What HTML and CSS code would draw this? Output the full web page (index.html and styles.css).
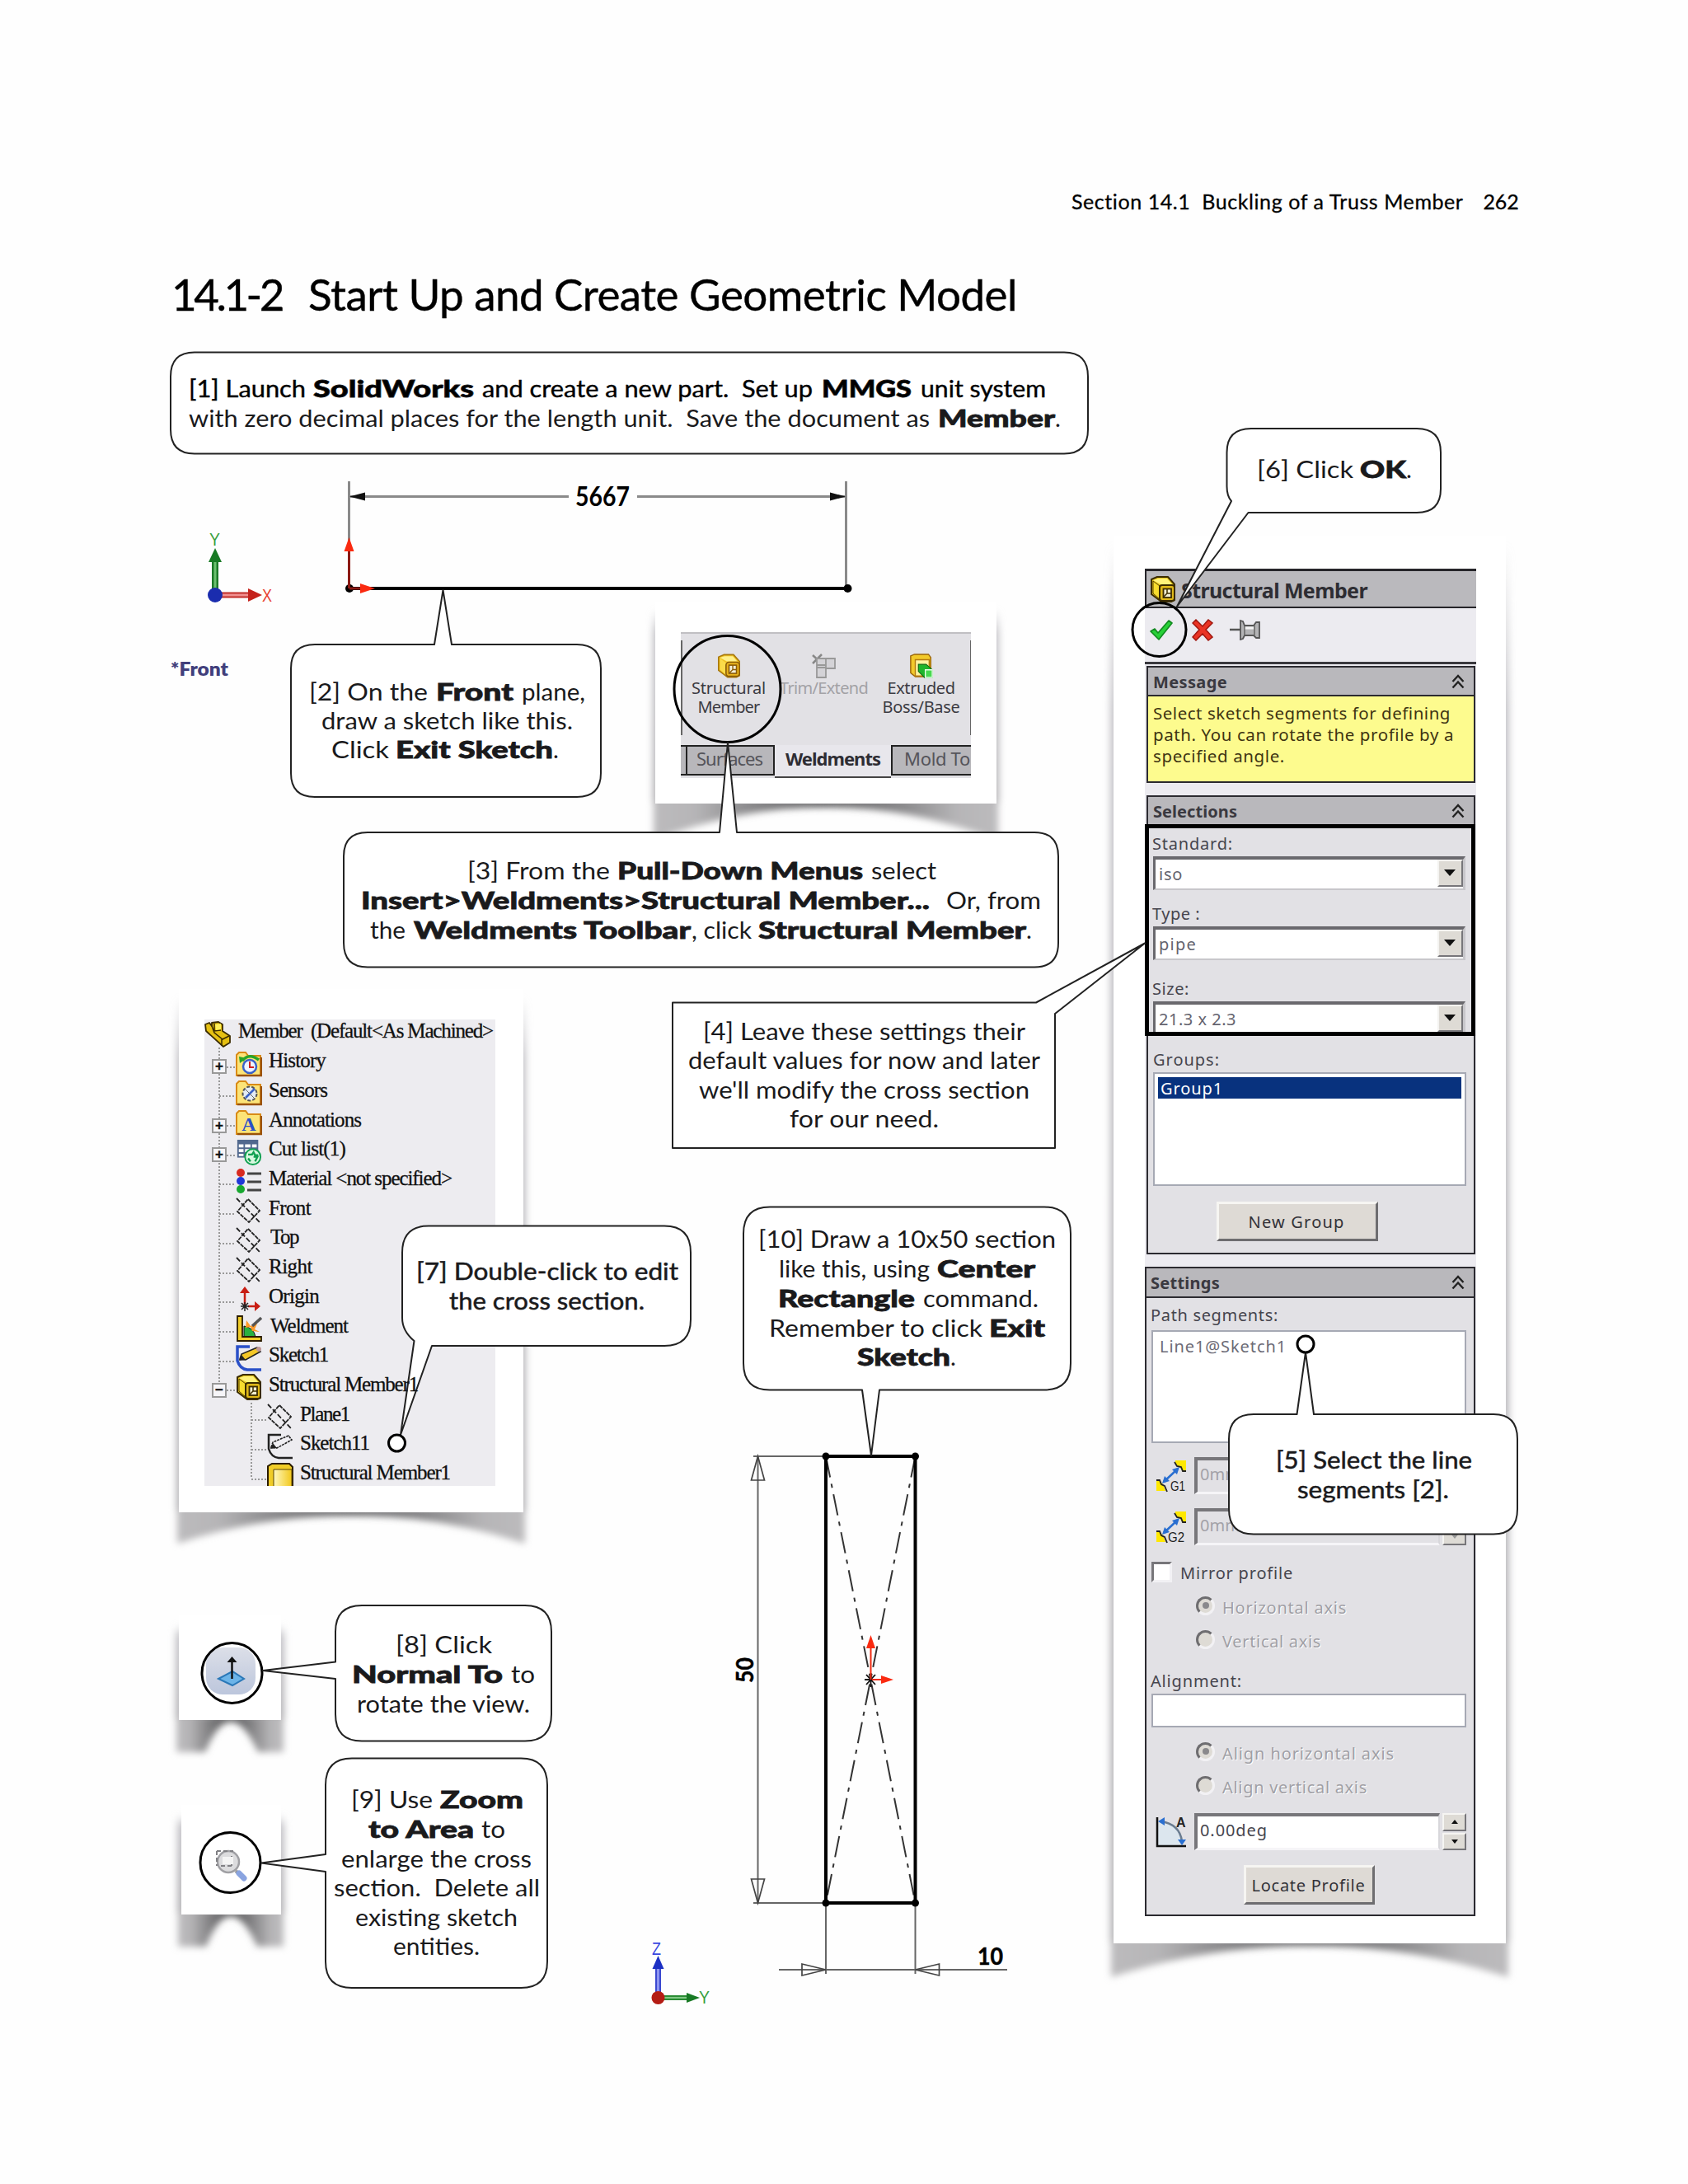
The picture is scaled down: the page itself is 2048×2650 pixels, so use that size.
FILE: index.html
```html
<!DOCTYPE html>
<html lang="en">
<head>
<meta charset="utf-8">
<title>Section 14.1 Buckling of a Truss Member</title>
<link rel="stylesheet" href="styles.css">
</head>
<body>
<svg class="defs" width="0" height="0">
  <symbol id="cube" viewBox="0 0 32 32">
    <path d="M2 4 9 1h13l8 9v19l-4 2H14L2 22z" fill="#e8c81c" stroke="#3b2c00" stroke-width="2" stroke-linejoin="round"/>
    <path d="M4 5 10 3h11l6 7H13z" fill="#fff27a"/>
    <path d="M4 6v15l8 7V12z" fill="#f7dc2e" stroke="#5a4500" stroke-width="1"/>
    <rect x="12" y="11" width="18" height="19" rx="3" fill="#e0b818" stroke="#3b2c00" stroke-width="2"/>
    <rect x="16.500" y="15.500" width="9.500" height="10.500" fill="#f4efd0" stroke="#3b2c00" stroke-width="1.800"/>
    <path d="M21 16v5l-4 4M21 21h5" fill="none" stroke="#3b2c00" stroke-width="1.500"/>
  </symbol>
  <symbol id="cubelite" viewBox="0 0 32 32">
    <path d="M2 4 9 1h13l8 9v19l-4 2H14L2 22z" fill="#f2c424" stroke="#a8780c" stroke-width="1.800" stroke-linejoin="round"/>
    <path d="M4 5 10 3h11l6 7H13z" fill="#fff08a"/>
    <path d="M4 6v15l8 7V12z" fill="#fbdc4a"/>
    <rect x="12" y="11" width="18" height="19" rx="4" fill="#eab41c" stroke="#8a5c08" stroke-width="1.800"/>
    <rect x="16" y="15" width="10" height="11" fill="#f4efd8" stroke="#8a5c08" stroke-width="1.800"/>
    <path d="M21 15v6l-4 4M21 21h5" fill="none" stroke="#8a5c08" stroke-width="1.500"/>
  </symbol>
  <symbol id="folder" viewBox="0 0 32 32">
    <path d="M1 30V5l3-3h8l3 4h15v24z" fill="#fce478" stroke="#d98b16" stroke-width="2"/>
    <path d="M2 30h29V8" fill="none" stroke="#9a5208" stroke-width="2.500"/>
  </symbol>
  <symbol id="plane" viewBox="0 0 32 32">
    <path d="M15 2 29 16 16 30 2 17z" fill="none" stroke="#222" stroke-width="1.800" stroke-dasharray="5 1"/>
    <path d="M1 1 30 31" stroke="#222" stroke-width="1.800" stroke-dasharray="6 2.500"/>
  </symbol>
  <symbol id="chev" viewBox="0 0 16 18">
    <path d="M1.500 9 8 2l6.500 7M1.500 16.500 8 9.500l6.500 7" fill="none" stroke="#222" stroke-width="2.400"/>
  </symbol>
  <symbol id="gap" viewBox="0 0 38 40">
    <path d="M24 1h13v14h-4l-3-5-6-4z" fill="#ffe800"/><path d="M23 3l3 5 5 1 2 5h4" fill="none" stroke="#222" stroke-width="1.800"/>
    <path d="M1 26h4l4 4 3 8H1z" fill="#ffe800"/><path d="M1 25h4l2 5 4 2 3 7" fill="none" stroke="#222" stroke-width="1.800"/>
    <path d="M10 27 25 13" stroke="#2a6fd0" stroke-width="2.500"/><path d="M29 9l-3 9-6-6zM8 29l3-9 6 6z" fill="#2a6fd0"/>
  </symbol>
  <linearGradient id="curl"><stop offset="0" stop-color="#bcbbbd"/><stop offset=".12" stop-color="#b6b5b7"/><stop offset=".5" stop-color="#4a4a4c"/><stop offset=".88" stop-color="#b6b5b7"/><stop offset="1" stop-color="#bcbbbd"/></linearGradient>
  <linearGradient id="side" x1="0" y1="0" x2="0" y2="1"><stop offset="0" stop-color="#c4c3c8" stop-opacity="0"/><stop offset=".12" stop-color="#c4c3c8"/><stop offset="1" stop-color="#b4b3b6"/></linearGradient>
  <linearGradient id="btnblue" x1="0" y1="0" x2="0" y2="1"><stop offset="0" stop-color="#dcdfe8"/><stop offset="1" stop-color="#bcc6dc"/></linearGradient>
  <linearGradient id="gold"><stop offset="0" stop-color="#fff9c0"/><stop offset="1" stop-color="#f2c81c"/></linearGradient>
  <filter id="soft" x="-20%" y="-50%" width="140%" height="200%"><feGaussianBlur stdDeviation="4"/></filter>
</svg>

<main class="page">
  <header class="running"><span data-w="476">Section 14.1&nbsp; Buckling of a Truss Member</span><span data-w="43">262</span></header>
  <h1 class="title"><span data-w="134">14.1-2</span><span data-w="860">Start Up and Create Geometric Model</span></h1>

  <!-- curled paper sheets -->
  <svg class="layer" viewBox="0 0 2048 2650">
    <g filter="url(#soft)">
      <path d="M792 740h420v235H792z" fill="url(#side)"/>
      <path d="M793 970h418v50Q1002 938 793 1020z" fill="url(#curl)"/>
      <path d="M1347 660h484v1698h-484z" fill="url(#side)"/>
      <path d="M1348 2353h482v46Q1589 2322 1348 2399z" fill="url(#curl)"/>
      <path d="M214 1210h424v624H214z" fill="url(#side)"/>
      <path d="M215 1830h422v43Q426 1804 215 1873z" fill="url(#curl)"/>
      <path d="M213 1972h132v114H213z" fill="url(#side)"/>
      <path d="M214 2082h130v44h-31Q279 2052 249 2126h-35z" fill="url(#curl)"/>
      <path d="M215 2202h130v120H215z" fill="url(#side)"/>
      <path d="M216 2318h128v44h-32Q279 2288 250 2362h-34z" fill="url(#curl)"/>
    </g>
    <g fill="#fff">
      <path d="M795 730h414v245H795zM1351 650h476v1708h-476zM217 1200h418v635H217zM217 1960h124v127H217zM220 2190h121v133H220z"/>
    </g>
  </svg>

  <!-- Weldments toolbar -->
  <section class="ribbon">
    <div class="tools">
      <div class="tool t1"><svg class="ic" width="29" height="30"><use href="#cubelite"/></svg><span data-w="90">Structural</span><span data-w="75">Member</span></div>
      <div class="tool t2 off"><svg class="ic" width="29" height="30" viewBox="0 0 29 30"><path d="M1 2 12 12M12 1 1 12" stroke="#888" stroke-width="2.500"/><path d="M6 14h11v15H6zM6 6h11v11H6zM17 6h11v12H17z" fill="#d4d3d7" stroke="#999" stroke-width="1.800"/></svg><span data-w="107">Trim/Extend</span></div>
      <div class="tool t3"><svg class="ic" width="30" height="30" viewBox="0 0 32 32"><path d="M2 3 7 1h18l3 4v20l-4 5H8L2 25z" fill="#f2c92a" stroke="#9a6408" stroke-width="1.500"/><path d="M8 8h18v21H8z" fill="#fff3a0" stroke="#b37a10" stroke-width="1.500"/><path d="M12 14h10l8 7v10H20l-8-8z" fill="#1fb62c" stroke="#0a6a12" stroke-width="1.200"/><path d="M21 21h9v10h-9z" fill="#48d850" stroke="#e8ffe8" stroke-width="1.500"/></svg><span data-w="82">Extruded</span><span data-w="94">Boss/Base</span></div>
    </div>
    <div class="tabs"><i class="stub"></i><div class="tab s1"><span data-w="80">Surfaces</span></div><div class="tab on"><span data-w="115">Weldments</span></div><div class="tab s3"><span data-w="80">Mold To</span></div></div>
  </section>

  <!-- feature tree -->
  <section class="tree">
    <div class="row root"><svg class="ic" viewBox="0 0 32 32"><path d="M1 4 6 2l3 4V2l8-1 5 3v8l9 6v8l-8 5L2 12z" fill="#e6c012" stroke="#3b2c00" stroke-width="1.800" stroke-linejoin="round"/><path d="M9 6l3 8 10 8 8-4M21 22v8M12 3v9l8-1" fill="none" stroke="#3b2c00" stroke-width="1.500"/><path d="M13 4l7-1v7l-6 1z" fill="#fff05a"/></svg><span data-w="309">Member&nbsp; (Default&lt;As Machined&gt;</span></div>
    <div class="row"><b class="exp">+</b><i class="dots"></i><svg class="ic" viewBox="0 0 32 32"><use href="#folder"/><circle cx="17" cy="19" r="8" fill="#eef4ff" stroke="#3a62c8" stroke-width="2.500"/><path d="M17 13v7h5" fill="none" stroke="#d02020" stroke-width="2"/><path d="M8 12Q16 2 28 11" fill="none" stroke="#28a428" stroke-width="3.500"/><path d="M4 7l9 2-8 6z" fill="#28a428"/></svg><span data-w="69">History</span></div>
    <div class="row"><i class="dots wide"></i><svg class="ic" viewBox="0 0 32 32"><use href="#folder"/><circle cx="17" cy="17" r="8.500" fill="#e4ecf4" stroke="#555" stroke-width="2" stroke-dasharray="4 2"/><path d="M12 22l11-11" stroke="#3a62c8" stroke-width="2.500"/><path d="M12 12l10 10" stroke="#666" stroke-width="1"/></svg><span data-w="71">Sensors</span></div>
    <div class="row"><b class="exp">+</b><i class="dots"></i><svg class="ic" viewBox="0 0 32 32"><use href="#folder"/><text x="16" y="26" class="alet">A</text></svg><span data-w="112">Annotations</span></div>
    <div class="row"><b class="exp">+</b><i class="dots"></i><svg class="ic" viewBox="0 0 32 34"><path d="M1 1h27v23H1z" fill="#51688e"/><path d="M3 7h6v4H3zM11 7h7v4h-7zM20 7h6v4h-6zM3 13h6v4H3zM11 13h7v4h-7zM3 19h6v3H3z" fill="#fff"/><circle cx="21" cy="23" r="10" fill="#d8f8e0" stroke="#10a050" stroke-width="2"/><path d="M15 20h5l2-3 2 4h4M15 25l3 4M22 23h5l-3 6" fill="none" stroke="#10a050" stroke-width="2.500"/></svg><span data-w="93">Cut list(1)</span></div>
    <div class="row"><i class="dots wide"></i><svg class="ic" viewBox="0 0 32 32"><circle cx="6" cy="6" r="5" fill="#d82a20"/><circle cx="6" cy="16" r="5" fill="#2038d8"/><circle cx="6" cy="26" r="5" fill="#18a830"/><path d="M14 7h17M14 17h17M14 27h17" stroke="#444" stroke-width="3"/></svg><span data-w="222">Material &lt;not specified&gt;</span></div>
    <div class="row"><i class="dots wide"></i><svg class="ic"><use href="#plane"/></svg><span data-w="51">Front</span></div>
    <div class="row"><i class="dots wide"></i><svg class="ic"><use href="#plane"/></svg><span class="nudge" data-w="34">Top</span></div>
    <div class="row"><i class="dots wide"></i><svg class="ic"><use href="#plane"/></svg><span data-w="53">Right</span></div>
    <div class="row"><i class="dots wide"></i><svg class="ic" viewBox="0 0 32 32"><path d="M11 24V7M15 25h8" stroke="#c81e14" stroke-width="2.500"/><path d="M11 1l6 8H5zM30 25l-7-6v12z" fill="#c81e14"/><path d="M11 20v11M6 25h10M7 21l8 8M15 21l-8 8" stroke="#222" stroke-width="1.500"/></svg><span data-w="61">Origin</span></div>
    <div class="row"><i class="dots wide"></i><svg class="ic" viewBox="0 0 32 32"><path d="M10 13q12 2 14 13H10z" fill="#28b040" stroke="#111"/><path d="M2 1h6v25h23v5H2z" fill="#f0cc28" stroke="#2a1c00" stroke-width="1.800"/><path d="M13 6l5 7 8-3-3 7 6 3-9-1-2-5-6 1z" fill="#ff9a28"/><path d="M20 13 31 3" stroke="#555" stroke-width="3.500"/></svg><span class="nudge" data-w="94">Weldment</span></div>
    <div class="row"><i class="dots wide"></i><svg class="ic" viewBox="0 0 32 32"><path d="M17 2H2v17q3 10 12 11h17" fill="none" stroke="#2a50c8" stroke-width="3.500"/><path d="M5 17l2-6L26 3l4 5-18 10z" fill="#f4c828" stroke="#222" stroke-width="1.600"/><path d="M4 19l3-7 5 6z" fill="#222"/><circle cx="28" cy="5" r="3" fill="#c09a98"/></svg><span data-w="72">Sketch1</span></div>
    <div class="row"><b class="exp">−</b><i class="dots"></i><svg class="ic"><use href="#cube"/></svg><span data-w="181">Structural Member1</span></div>
    <div class="row sub"><i class="dots wide"></i><svg class="ic"><use href="#plane"/></svg><span data-w="60">Plane1</span></div>
    <div class="row sub"><i class="dots wide"></i><svg class="ic" viewBox="0 0 32 32"><path d="M17 2H2v17q3 10 12 11h17" fill="none" stroke="#222" stroke-width="2.500"/><path d="M5 17l2-6L26 3l4 5-18 10z" fill="#f0eff3" stroke="#222" stroke-width="1.600" stroke-dasharray="3 1"/><path d="M4 19l3-7 5 6z" fill="#222"/></svg><span data-w="84">Sketch11</span></div>
    <div class="row sub"><i class="dots wide"></i><svg class="ic" viewBox="0 0 32 32"><path d="M1 32V4l5-3h21l4 4v27z" fill="#f0cc28" stroke="#2a1c00" stroke-width="2"/><path d="M8 8h22v24H8z" fill="url(#gold)" stroke="#5a4500"/></svg><span data-w="182">Structural Member1</span></div>
    <i class="stem main"></i><i class="stem child"></i>
  </section>

  <!-- property manager -->
  <section class="pm">
    <div class="pm-title"><svg width="32" height="34"><use href="#cube"/></svg><span data-w="226">Structural Member</span></div>
    <div class="pm-tools">
      <svg width="31" height="27" viewBox="0 0 31 27"><path d="M3 15l5-3 4 5L25 2l4 3-16 20z" fill="#28d038" stroke="#128a20" stroke-width="1.600" stroke-linejoin="round"/></svg>
      <svg class="no" width="26" height="27" viewBox="0 0 26 27"><path d="M5 1l8 8 7-8 5 4-8 8 8 9-5 4-7-8-8 8-4-4 8-9-8-8z" fill="#ea3424" stroke="#a01810" stroke-width="1.500"/></svg>
      <svg class="pin" width="37" height="26" viewBox="0 0 37 26"><path d="M0 13h13" stroke="#555" stroke-width="2.500"/><path d="M13 2l3 1 2 5h11l3-4h4v19h-4l-3-3H18l-2 4-3 1z" fill="#b4b4b6" stroke="#555" stroke-width="1.800"/><path d="M18 11h11" stroke="#f4f4f4" stroke-width="3"/><path d="M18 8v12M30 7v14" stroke="#666" stroke-width="1.500"/></svg>
    </div>
    <div class="group msg">
      <h2><span data-w="90">Message</span><svg width="16" height="18"><use href="#chev"/></svg></h2>
      <p><span data-w="361">Select sketch segments for defining</span><br><span data-w="365">path. You can rotate the profile by a</span><br><span data-w="160">specified angle.</span></p>
    </div>
    <div class="group sel">
      <h2><span data-w="102">Selections</span><svg width="16" height="18"><use href="#chev"/></svg></h2>
      <div class="marked">
        <label class="l34"><span data-w="98">Standard:</span></label>
        <div class="combo"><span data-w="29">iso</span><i></i></div>
        <label class="l44"><span data-w="58">Type :</span></label>
        <div class="combo"><span data-w="46">pipe</span><i></i></div>
        <label class="l50"><span data-w="45">Size:</span></label>
        <div class="combo cut"><span data-w="94">21.3 x 2.3</span><i></i></div>
      </div>
      <label class="l44 in"><span data-w="81">Groups:</span></label>
      <div class="list"><div class="picked"><span data-w="76">Group1</span></div></div>
      <div class="btn new"><span data-w="117">New Group</span></div>
    </div>
    <div class="group set">
      <h2><span data-w="84">Settings</span><svg width="16" height="18"><use href="#chev"/></svg></h2>
      <label class="l39"><span data-w="155">Path segments:</span></label>
      <div class="list path"><span data-w="154">Line1@Sketch1</span></div>
      <div class="field"><svg width="38" height="40"><use href="#gap"/><text x="18" y="38" class="gl" textLength="18">G1</text></svg><div class="inp dis"><span>0mm</span></div><div class="spin dis"><i class="up"></i><i class="dn"></i></div></div>
      <div class="field"><svg width="38" height="40"><use href="#gap"/><text x="15" y="38" class="gl" textLength="20">G2</text></svg><div class="inp dis"><span>0mm</span></div><div class="spin dis"><i class="up"></i><i class="dn"></i></div></div>
      <div class="check"><i></i><span data-w="137">Mirror profile</span></div>
      <div class="radio on"><i></i><span data-w="151">Horizontal axis</span></div>
      <div class="radio"><i></i><span data-w="120">Vertical axis</span></div>
      <label class="l45"><span data-w="111">Alignment:</span></label>
      <div class="list blank"></div>
      <div class="radio on first"><i></i><span data-w="209">Align horizontal axis</span></div>
      <div class="radio"><i></i><span data-w="176">Align vertical axis</span></div>
      <div class="field ang"><svg width="38" height="38" viewBox="0 0 38 38"><path d="M2 8Q30 6 33 34L2 36z" fill="#dce6ee"/><path d="M2 1v35h35" fill="none" stroke="#111" stroke-width="2.500"/><path d="M6 6Q29 9 32 30" fill="none" stroke="#6a7c90" stroke-width="2.500"/><path d="M3 6l8-5v10zM32 35l-5-7h10z" fill="#2a6fd0"/><text x="25" y="13" class="al">A</text></svg><div class="inp"><span data-w="82">0.00deg</span></div><div class="spin"><i class="up"></i><i class="dn"></i></div></div>
      <div class="btn loc"><span data-w="138">Locate Profile</span></div>
    </div>
  </section>

  <!-- sketches, callouts and their leaders -->
  <svg class="layer" viewBox="0 0 2048 2650">
    <g class="dim">
      <path d="M423.500 584v72M1026.500 584v130M423 602.500h267M773 602.500h254" stroke="#8a8a8a" stroke-width="3" fill="none"/>
      <path d="M424 602.500l19-5v10zM1026 602.500l-19-5v10z" fill="#111"/>
      <path d="M423 714h606" stroke="#000" stroke-width="4"/>
      <circle cx="424" cy="714" r="5"/><circle cx="1028.500" cy="714" r="5"/>
      <path d="M423.500 714v-48M424 714h14" stroke="#8c1a14" stroke-width="3"/><path d="M423.500 652l6 17h-12zM455 714l-18-6v12z" fill="#fa2a10"/>
      <text class="num" x="698" y="614" textLength="66">5667</text>
    </g>
    <g>
      <path d="M261 682v36" stroke="#1c7a28" stroke-width="8"/><path d="M261 682v36" stroke="#6cc070" stroke-width="3"/><path d="M261 665l8 17h-16z" fill="#187a24"/>
      <path d="M266 722h36" stroke="#c02c28" stroke-width="7"/><path d="M266 722h36" stroke="#f09090" stroke-width="3"/><path d="M318 722l-17-8v16z" fill="#c4221c"/><circle cx="261" cy="722" r="9" fill="#1a2cae"/>
      <text class="axis" x="254" y="662" textLength="13" fill="#38a040">Y</text><text class="axis" x="318" y="730" textLength="12" fill="#e84030">X</text>
      <text class="front" x="207" y="820" textLength="70">*Front</text>
    </g>
    <g fill="none">
      <path d="M914 1767h88M914 2309h88M919.500 1767v542M1002 2309v86M1110.500 2309v86M945 2390h277" stroke="#666" stroke-width="2"/>
      <path d="M919.500 1767l8 29h-16zM919.500 2309l8-29h-16zM1002 2390l-29-7v14zM1110.500 2390l29-7v14z" stroke="#444" stroke-width="1.700"/>
      <path d="M1002 1767l108.500 542M1110.500 1767 1002 2309" stroke="#333" stroke-width="2" stroke-dasharray="26 8 5 8"/>
      <path d="M1002 1767h108.500v542H1002z" stroke="#000" stroke-width="4"/>
      <path d="M1056.500 2030v17M1049 2038h15M1051 2032l11 12M1062 2032l-11 12" stroke="#111" stroke-width="1.800"/>
      <path d="M1056.500 2038v-40M1058 2038h12" stroke="#f02a10" stroke-width="2"/>
    </g>
    <g><circle cx="1002" cy="1767" r="4.500"/><circle cx="1110.500" cy="1767" r="4.500"/><circle cx="1002" cy="2309" r="4.500"/><circle cx="1110.500" cy="2309" r="4.500"/>
      <path d="M1056.500 1984l5.500 16h-11zM1084 2038l-15-5v10z" fill="#fa2a10"/>
      <text class="num2" x="1186" y="2384" textLength="31">10</text><text class="num2" transform="translate(914 2042) rotate(-90)" textLength="31">50</text></g>
    <g>
      <path d="M798.500 2388v34" stroke="#3a48d0" stroke-width="7"/><path d="M798.500 2388v34" stroke="#8c94f0" stroke-width="3"/><path d="M798.500 2373l7 16h-14z" fill="#1c30c4"/>
      <path d="M804 2424h30" stroke="#2a8c34" stroke-width="6"/><path d="M804 2424h30" stroke="#80c884" stroke-width="2"/><path d="M849 2424l-16-6v12z" fill="#187a24"/><circle cx="798.500" cy="2424" r="8" fill="#b41c14"/>
      <text class="axis" x="791" y="2372" textLength="11" fill="#3a48e0">Z</text><text class="axis" x="848" y="2431" textLength="13" fill="#38a040">Y</text>
    </g>
    <!-- view buttons -->
    <g>
      <circle cx="281.500" cy="2030" r="36.500" fill="#fff"/><rect x="250" y="1999" width="60" height="57" rx="20" fill="url(#btnblue)"/>
      <path d="M265 2037l17-9 14 9-14 8z" fill="#6cb4e8" stroke="#2a78b8" stroke-width="2"/><path d="M281.500 2037v-22" stroke="#111" stroke-width="2.500"/><path d="M281.500 2010l6 7h-12z" fill="#111"/>
      <circle cx="277" cy="2259" r="13" fill="#dcdcde" stroke="#a0a0a4" stroke-width="2.500"/><path d="M263 2246h20M263 2246v18M281 2252v12M268 2264h14" stroke="#808084" stroke-width="2" stroke-dasharray="5 3"/><path d="M270 2253h13v9h-13z" fill="#f4f4f4"/><path d="M286 2270l3 3" stroke="#999" stroke-width="4"/><path d="M290 2273l6 6" stroke="#8aa4e0" stroke-width="7" stroke-linecap="round"/>
    </g>
    <g class="ring"><circle cx="281.500" cy="2030" r="36.500"/><circle cx="279.500" cy="2260" r="36.500"/><circle cx="882.500" cy="836" r="64.500"/><circle cx="1406.500" cy="764" r="32.500"/></g>
    <g class="bub">
      <path d="M236 427.500H1291Q1320 427.500 1320 457V521Q1320 550.500 1291 550.500H236Q207 550.500 207 521V457Q207 427.500 236 427.500z"/>
      <path d="M382 782H527l10.500-66L548 782H700Q729 782 729 811V938Q729 967 700 967H382Q353 967 353 938V811Q353 782 382 782z"/>
      <path d="M446 1010H873l10-109 11 109H1255Q1284 1010 1284 1039V1144Q1284 1173.500 1255 1173.500H446Q417 1173.500 417 1144V1039Q417 1010 446 1010z"/>
      <path d="M816 1216.500H1257l132-72L1280 1230V1393H816z"/>
      <path d="M1521 1716h52.500l10.500-75 10 75H1812Q1841 1716 1841 1746V1831Q1841 1861.500 1812 1861.500H1521Q1491 1861.500 1491 1831V1746Q1491 1716 1521 1716z"/>
      <path d="M1518 520H1719Q1748 520 1748 549V593Q1748 622 1719 622H1514.500L1428 736l66-128Q1488.500 602 1488.500 590V549Q1488.500 520 1518 520z"/>
      <path d="M520 1487.500H806Q838 1487.500 838 1520V1601Q838 1633 806 1633H524L486 1741l16.500-114Q488 1615 488 1599V1520Q488 1487.500 520 1487.500z"/>
      <path d="M439 1948H637Q669 1948 669 1980V2080Q669 2112.500 637 2112.500H439Q407 2112.500 407 2080V2037l-88-10 88-10.500V1980Q407 1948 439 1948z"/>
      <path d="M427 2133.500H632Q664 2133.500 664 2166V2380Q664 2412 632 2412H427Q395 2412 395 2380V2271l-78-10.500 78-10.500V2166Q395 2133.500 427 2133.500z"/>
      <path d="M934 1464.500H1267Q1299 1464.500 1299 1497V1654Q1299 1686.500 1267 1686.500H1067l-10 79.500-11-79.500H934Q902 1686.500 902 1654V1497Q902 1464.500 934 1464.500z"/>
    </g>
    <g class="ring"><circle cx="481.500" cy="1751" r="10" fill="#fff"/><circle cx="1584" cy="1631" r="10" fill="#fff"/></g>
    <g class="note">
      <g class="k"><text x="229" y="482" textLength="142">[1] Launch</text><text class="b" x="380" y="482" textLength="195">SolidWorks</text><text x="585" y="482" textLength="401">and create a new part.&nbsp; Set up</text><text class="b" x="997" y="482" textLength="109">MMGS</text><text x="1117" y="482" textLength="152">unit system</text></g>
      <text x="229" y="518" textLength="899">with zero decimal places for the length unit.&nbsp; Save the document as</text><text class="b" x="1138" y="518" textLength="142">Member</text><text x="1280" y="518">.</text>
      <text x="375" y="850" textLength="144">[2] On the</text><text class="b" x="529" y="850" textLength="94">Front</text><text x="633" y="850" textLength="77">plane,</text>
      <text x="390" y="885" textLength="305">draw a sketch like this.</text>
      <text x="402" y="920" textLength="70">Click</text><text class="b" x="480" y="920" textLength="191">Exit Sketch</text><text x="671" y="920">.</text>
      <text x="567" y="1067" textLength="173">[3] From the</text><text class="b" x="749" y="1067" textLength="298">Pull-Down Menus</text><text x="1057" y="1067" textLength="79">select</text>
      <text class="b" x="438" y="1103" textLength="690">Insert&gt;Weldments&gt;Structural Member...</text><text x="1148" y="1103" textLength="115">Or, from</text>
      <text x="449" y="1139" textLength="43">the</text><text class="b" x="502" y="1139" textLength="336">Weldments Toolbar</text><text x="839" y="1139" textLength="73">, click</text><text class="b" x="920" y="1139" textLength="325">Structural Member</text><text x="1245" y="1139">.</text>
      <text x="853" y="1262" textLength="391">[4] Leave these settings their</text><text x="835" y="1297" textLength="427">default values for now and later</text><text x="848" y="1333" textLength="401">we'll modify the cross section</text><text x="958" y="1368" textLength="181">for our need.</text>
      <g class="h"><text x="1548" y="1782" textLength="238">[5] Select the line</text><text x="1574" y="1818" textLength="184">segments [2].</text></g>
      <text x="1525" y="580" textLength="117">[6] Click</text><text class="b" x="1650" y="580" textLength="56">OK</text><text x="1706" y="580">.</text>
      <text class="h" x="505" y="1553" textLength="318">[7] Double-click to edit</text><text class="h" x="545" y="1589" textLength="237">the cross section.</text>
      <text x="480" y="2006" textLength="117">[8] Click</text><text class="b" x="427" y="2042" textLength="183">Normal To</text><text x="620" y="2042" textLength="29">to</text><text x="433" y="2078" textLength="210">rotate the view.</text>
      <text x="426" y="2194" textLength="99">[9] Use</text><text class="b" x="534" y="2194" textLength="101">Zoom</text><text class="b" x="447" y="2230" textLength="128">to Area</text><text x="584" y="2230" textLength="29">to</text><text x="414" y="2266" textLength="231">enlarge the cross</text><text x="405" y="2301" textLength="250">section.&nbsp; Delete all</text><text x="431" y="2337" textLength="197">existing sketch</text><text x="477" y="2372" textLength="105">entities.</text>
      <text x="920" y="1514" textLength="361">[10] Draw a 10x50 section</text><text x="945" y="1550" textLength="183">like this, using</text><text class="b" x="1137" y="1550" textLength="119">Center</text><text class="b" x="944" y="1586" textLength="166">Rectangle</text><text x="1120" y="1586" textLength="140">command.</text><text x="933" y="1622" textLength="259">Remember to click</text><text class="b" x="1200" y="1622" textLength="68">Exit</text><text class="b" x="1040" y="1657" textLength="113">Sketch</text><text x="1153" y="1657">.</text>
    </g>
  </svg>
</main>
<script src="fit.js"></script>
</body>
</html>
```
FILE: styles.css
```css
* { box-sizing: border-box; }
body { margin: 0; background: #fefefe; font-family: "Noto Sans", "Open Sans", sans-serif; }
.defs { position: absolute; }
.page { position: relative; width: 2048px; height: 2650px; overflow: hidden; }
span { display: inline-block; white-space: nowrap; }
.layer { position: absolute; left: 0; top: 0; width: 2048px; height: 2650px; }
i { font-style: normal; }

.running { display: flex; gap: 24px; padding: 226px 0 0 1300px; font: 25px/36px Lato, sans-serif; color: #000; -webkit-text-stroke: .3px #000; }
.title { display: flex; gap: 32px; margin: 0; padding: 63px 0 0 208px; font: 53px/64px Lato, sans-serif; color: #000; -webkit-text-stroke: .4px #000; }

/* callouts */
.bub path { fill: #fff; stroke: #222; stroke-width: 2; stroke-linejoin: round; }
.ring circle { stroke: #000; stroke-width: 3; }
.ring circle:not([fill]) { fill: none; }
.note text { font-family: Lato, sans-serif; font-size: 29px; fill: #1a1a1c; }
.note .k text { fill: #000; stroke: #000; stroke-width: .4px; }
.note text.h, .note .h text { stroke: #1a1a1c; stroke-width: .5px; }
.note .b, .note .k .b { font-weight: 900; stroke: #1a1a1c; stroke-width: .8px; }
.num { font: 700 33px Lato, sans-serif; }
.num2 { font: 700 28px Lato, sans-serif; stroke: #000; stroke-width: .5px; }
.axis { font: 22px "Liberation Sans", sans-serif; }
.front { font: 800 22px Lato, sans-serif; fill: #413f7c; }

/* toolbar */
.ribbon { position: absolute; left: 826px; top: 767px; width: 352px; height: 177px; background: #e2e1e5; border-top: 2px solid #c0bfc3; overflow: hidden; }
.tools { position: relative; display: flex; height: 135px; padding-top: 24px; }
.tools::before, .tools::after { content: ""; position: absolute; top: 8px; height: 115px; width: 1.500px; background: #666; }
.tools::before { left: 0; }
.tools::after { right: 0; }
.tool { display: flex; flex-direction: column; align-items: center; font-size: 20px; line-height: 23px; color: #3c3b42; }
.tool .ic { margin-bottom: 0; }
.t1 { width: 117px; }
.t2 { width: 116px; }
.t3 { width: 122px; }
.off { color: #a3a2a6; }
.tabs { display: flex; height: 42px; align-items: flex-start; font-size: 22px; line-height: 29px; color: #55545a; }
.stub { width: 6px; height: 37px; background: #b8b7bb; border: solid #222; border-width: 2px 0; }
.tab { background: #b8b7bb; border: 2px solid #222; height: 37px; }
.s1 { width: 108px; padding-left: 11px; }
.on.tab { width: 141px; height: 40px; padding-left: 13px; background: #e8e7ec; border: 0; border-bottom: 2px solid #444; color: #2e2d33; font-weight: 700; padding-top: 2px; }
.s3 { width: 97px; padding-left: 14px; border-right: 0; }

/* feature tree */
.tree { position: absolute; left: 248px; top: 1237px; width: 353px; height: 566px; background: #edecf0; overflow: hidden; font: 25px/36px "Liberation Serif", serif; color: #111; -webkit-text-stroke: .3px #111; }
.row { display: flex; height: 35.730px; align-items: center; padding-left: 9px; position: relative; z-index: 1; }
.row .ic { width: 32px; height: 32px; margin-right: 8px; flex: none; }
.row span { margin-top: -7px; line-height: 34px; }
.root { padding-left: 0; }
.root span { margin-left: 1px; margin-top: -7px; }
.sub { padding-left: 47px; }
.exp { width: 18px; height: 18px; border: 2px solid #999; background: #f6f5f8; font: 700 17px/13px "Liberation Sans", sans-serif; text-align: center; margin-top: 7px; flex: none; }
.dots { width: 11px; height: 2px; margin-top: 8px; flex: none; background: repeating-linear-gradient(90deg, #999 0 2px, transparent 2px 4px); }
.dots.wide { width: 20px; margin-left: 9px; }
.row .nudge { margin-left: 2px; }
.stem { position: absolute; width: 2px; background: repeating-linear-gradient(#999 0 2px, transparent 2px 4px); }
.main { left: 17px; top: 34px; height: 412px; }
.child { left: 56px; top: 465px; height: 92px; }
.sub .dots.wide { width: 19px; margin-left: 10px; }
.alet { font: 700 24px "Liberation Serif", serif; fill: #2a50c8; text-anchor: middle; }

/* property manager */
.pm { position: absolute; left: 1389px; top: 690px; width: 402px; height: 1635px; background: #ecebf0; font-size: 20px; color: #46454e; }
.pm span { position: relative; top: 1px; left: -1px; }
.pm-title { display: flex; align-items: center; gap: 7px; height: 48px; padding-left: 4px; background: #bab9bd; border: solid #26252a; border-width: 3px 0 2px 2px; font: 700 25px/44px "Noto Sans", sans-serif; color: #2e2d33; }
.pm-tools { display: flex; align-items: center; height: 68px; padding: 0 0 13px 4px; border-bottom: 3px solid #3a393e; }
.no { margin-left: 22px; }
.pin { margin-left: 20px; }
.group { margin-left: 2px; width: 399px; background: #e2e1e5; border: 2px solid #2b2a30; }
.group h2 { display: flex; justify-content: space-between; align-items: center; margin: 0; height: 35px; padding: 0 11px 0 7px; background: #b9b8bc; border-bottom: 2px solid #2b2a30; font: 700 20px/32px "Noto Sans", sans-serif; color: #3a3940; }
.msg { margin-top: 2px; height: 142px; background: #fdfb8e; }
.msg p { margin: 6px 0 0; padding-left: 7px; font-size: 20.500px; line-height: 26px; color: #3e3412; }
.sel { margin-top: 15px; height: 557px; }
.sel h2 { height: 33px; border: 0; }
.marked { margin: 0 -2px 0 -4px; height: 257px; border: 5px solid #000; padding: 0 7px 0 5px; }
.pm label { display: flex; align-items: flex-end; line-height: 32px; }
.l34 { height: 34px; }
.l44 { height: 44px; }
.l50 { height: 50px; }
.l45 { height: 45px; padding-left: 6px; }
.l39 { height: 39px; padding-left: 6px; padding-bottom: 3px; }
.in { padding-left: 7px; }
.combo { display: flex; justify-content: space-between; height: 41px; background: #fff; border: solid #6a696e; border-width: 4px 3px 0 3px; border-right-color: #c8c7cb; border-bottom: 2px solid #c8c7cb; padding-left: 5px; line-height: 34px; color: #64636e; }
.combo.cut { height: 37px; border-bottom: 0; }
.combo i { width: 31px; height: 33px; background: #dedbd5; border: 2px solid; border-color: #f4f3f0 #77767a #77767a #f4f3f0; position: relative; flex: none; }
.combo i::after { content: ""; position: absolute; left: 6px; top: 10px; border: 7px solid transparent; border-top: 8px solid #111; border-bottom: 0; }
.list { margin-left: 6px; width: 380px; height: 138px; background: #fff; border: 2px solid #a6a9b4; padding: 4px; }
.picked { height: 26px; background: #08327e; color: #fff; line-height: 26px; padding-left: 4px; }
.btn { height: 48px; background: #dedad5; border: 3px solid; border-color: #f6f5f2 #6e6d70 #6e6d70 #f6f5f2; text-align: center; line-height: 42px; color: #333238; }
.new { margin: 19px 0 0 83px; width: 196px; }
.set { margin-top: 15px; margin-left: 0; width: 401px; height: 788px; }
.set h2 { height: 36px; padding-left: 6px; }
.path { width: 382px; height: 137px; padding: 1px 9px; line-height: 32px; color: #6c6b76; margin-bottom: 17px; }
.field { display: flex; height: 45px; margin-bottom: 17px; padding-left: 11px; align-items: center; }
.inp { width: 298px; height: 45px; margin-left: 9px; padding-left: 4px; background: #fff; border: 4px solid; border-width: 4px 2px 3px 4px; border-color: #77767a #d8d7db #f6f5f8 #77767a; line-height: 32px; flex: none; }
.dis.inp { background: #e2e1e5; color: #a3a2a8; }
.spin { display: flex; flex-direction: column; gap: 2px; margin-left: 3px; }
.spin i { display: flex; align-items: center; justify-content: center; width: 29px; height: 21.500px; background: #dedbd5; border: 2px solid; border-color: #f6f5f2 #77767a #77767a #f6f5f2; color: #111; }
.spin i::after { content: ""; border: 4px solid transparent; }
.up::after { border-bottom: 5px solid currentColor !important; border-top: 0 !important; }
.dn::after { border-top: 5px solid currentColor !important; border-bottom: 0 !important; }
.spin.dis i { color: #999; }
.check { display: flex; align-items: center; height: 30px; padding-left: 6px; }
.check i { width: 25px; height: 25px; margin-right: 11px; background: #fff; border: 3px solid; border-color: #77767a #f2f1f4 #f2f1f4 #77767a; }
.radio { display: flex; align-items: center; height: 41px; padding-left: 60px; color: #a09fa5; text-shadow: 1px 1px #fff; }
.radio span { top: 2px; }
.check + .radio { margin-top: 6px; }
.radio i { width: 23px; height: 23px; margin: -1px 10px 0 0; border-radius: 50%; background: #dedbd5; border: 3px solid; border-color: #6e6d70 #f2f1f4 #f2f1f4 #6e6d70; display: flex; align-items: center; justify-content: center; }
.radio.on i::after { content: ""; width: 8px; height: 8px; border-radius: 50%; background: #8a898c; }
.blank { width: 382px; height: 41px; }
.first { margin-top: 9px; }
.ang { margin: 13px 0 18px; }
.loc { margin-left: 118px; width: 159px; }
.gl { font: 16px "Liberation Sans", sans-serif; fill: #222; }
.al { font: 700 16px "Liberation Sans", sans-serif; fill: #222; }
```
FILE: fit.js
```js
// Track each label so that it spans the width given in data-w.
document.querySelectorAll('[data-w]').forEach(function (el) {
  var n = el.textContent.length;
  var w = parseFloat(el.dataset.w);
  el.style.letterSpacing = ((w - el.getBoundingClientRect().width) / n).toFixed(3) + 'px';
});
// Stretch or squeeze the glyphs of callout lines evenly.
document.querySelectorAll('text[textLength]').forEach(function (t) {
  t.setAttribute('lengthAdjust', 'spacingAndGlyphs');
});
```
